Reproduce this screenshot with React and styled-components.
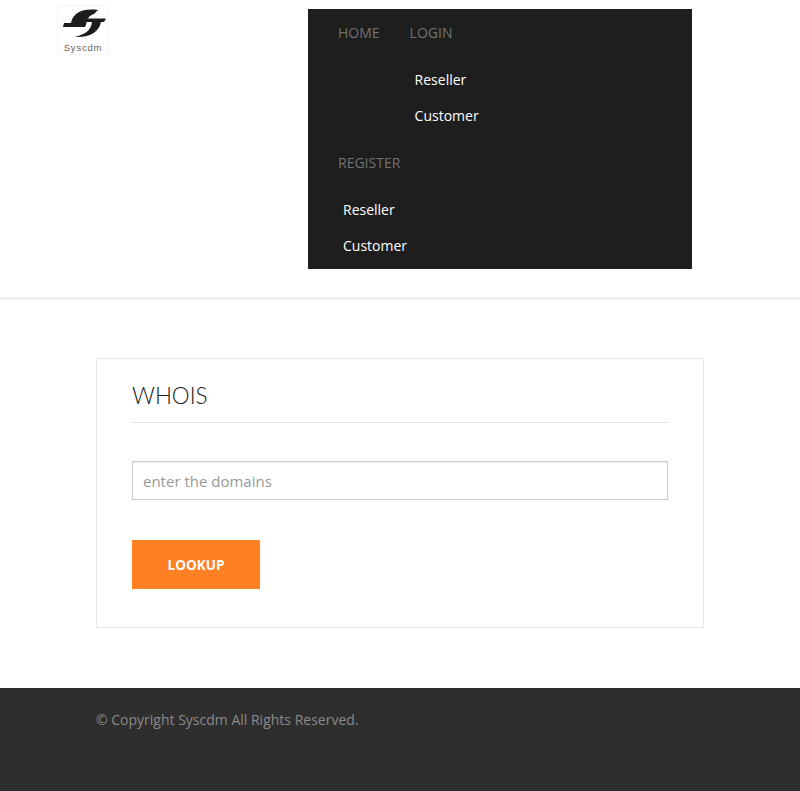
import React from "react";
import styled, { createGlobalStyle } from "styled-components";

const Global = createGlobalStyle`
  html, body { margin: 0; padding: 0; background: #fff; }
  body { font-family: "Open Sans", "Liberation Sans", sans-serif; font-size: 14px; color: #777; }
  * { box-sizing: border-box; }
`;
const Page = styled.div`width: 800px; height: 791px; display: flex; flex-direction: column;`;
const Header = styled.header`
  height: 300px; display: flex; align-items: flex-start;
  padding: 5px 0 0 57px; border-bottom: 3px solid #eee; flex: none;
`;
const Logo = styled.a`
  width: 52px; height: 50px; flex: none; border: 1px solid #f6f6f6; display: flex; flex-direction: column;
  align-items: center; padding-top: 2px; color: #666; text-decoration: none;
`;
const LogoName = styled.span`font-family: "Liberation Sans", sans-serif; font-size: 9.500px; line-height: 9px; margin-top: 3px; letter-spacing: .8px;`;
const Nav = styled.nav`
  width: 384px; height: 260px; margin: 4px 0 0 199px; background: #1e1e1e; padding-left: 15px; flex: none;
`;
const NavRow = styled.div`display: flex; align-items: flex-start;`;
const NavItem = styled.div`flex: none;`;
const NavLink = styled.a`
  display: block; height: 48px; line-height: 48px; padding: 0 15px; font-size: 14px; font-weight: 500;
  color: #727272; text-transform: uppercase; text-decoration: none;
`;
const SubMenu = styled.ul`list-style: none; margin: 0; padding: 5px 0 5px 20px;`;
const SubLink = styled.a`
  display: block; height: 36px; line-height: 36px; font-size: 14px; color: #fff; text-decoration: none; white-space: nowrap;
`;
const Main = styled.main`flex: 1; padding: 58px 96px 60px;`;
const Card = styled.section`height: 270px; border: 1px solid #e6e6e6; padding: 16px 35px 0;`;
const Title = styled.h2`
  margin: 0; height: 48px; line-height: 42px; font-family: "Lato", "Liberation Sans", sans-serif; font-weight: 300;
  font-size: 22.5px; color: #222; border-bottom: 1px solid #e3e3e3;
`;
const Input = styled.input`
  display: block; width: 100%; height: 39px; margin-top: 38px; padding: 0 10px; border: 1px solid #ccc;
  box-shadow: inset 0 1px 1px rgba(0,0,0,.08); font-family: inherit; font-size: 15px; color: #555; outline: none;
  &::placeholder { color: #999; opacity: 1; }
`;
const Button = styled.button`
  display: block; width: 128px; height: 49px; margin-top: 40px; background: #ff8022; border: 0; color: #fff;
  font-family: inherit; font-weight: 700; font-size: 13.5px; text-transform: uppercase; padding: 0;
`;
const Footer = styled.footer`height: 103px; flex: none; background: #2e2e2e; padding: 22px 96px 0; color: #8a8a8a; font-size: 14px; line-height: 20px;`;

const Menu = ({ items }) => (
  <SubMenu>{items.map(i => <li key={i}><SubLink href="#">{i}</SubLink></li>)}</SubMenu>
);

export default function App() {
  return (
    <Page>
      <Global />
      <Header>
        <Logo href="#">
          <svg width="46" height="32" viewBox="58 8 46 32">
            <path d="M96 10 C82 8 71 12 69 23 H62 L61 27 H83 L84 25 C85 18 88 15 92 14 Z" fill="#1c1c1c"/>
            <path d="M84 18.500 H104 L102 22 H99 C97 32 88 38 72 37 C82 35 89 31 90 22 H83 Z" fill="#1c1c1c"/>
          </svg>
          <LogoName>Syscdm</LogoName>
        </Logo>
        <Nav>
          <NavRow>
            <NavItem><NavLink href="#">Home</NavLink></NavItem>
            <NavItem>
              <NavLink href="#">Login</NavLink>
              <Menu items={["Reseller", "Customer"]} />
            </NavItem>
          </NavRow>
          <NavItem>
            <NavLink href="#">Register</NavLink>
            <Menu items={["Reseller", "Customer"]} />
          </NavItem>
        </Nav>
      </Header>
      <Main>
        <Card>
          <Title>WHOIS</Title>
          <Input placeholder="enter the domains" />
          <Button>Lookup</Button>
        </Card>
      </Main>
      <Footer>© Copyright Syscdm All Rights Reserved.</Footer>
    </Page>
  );
}
